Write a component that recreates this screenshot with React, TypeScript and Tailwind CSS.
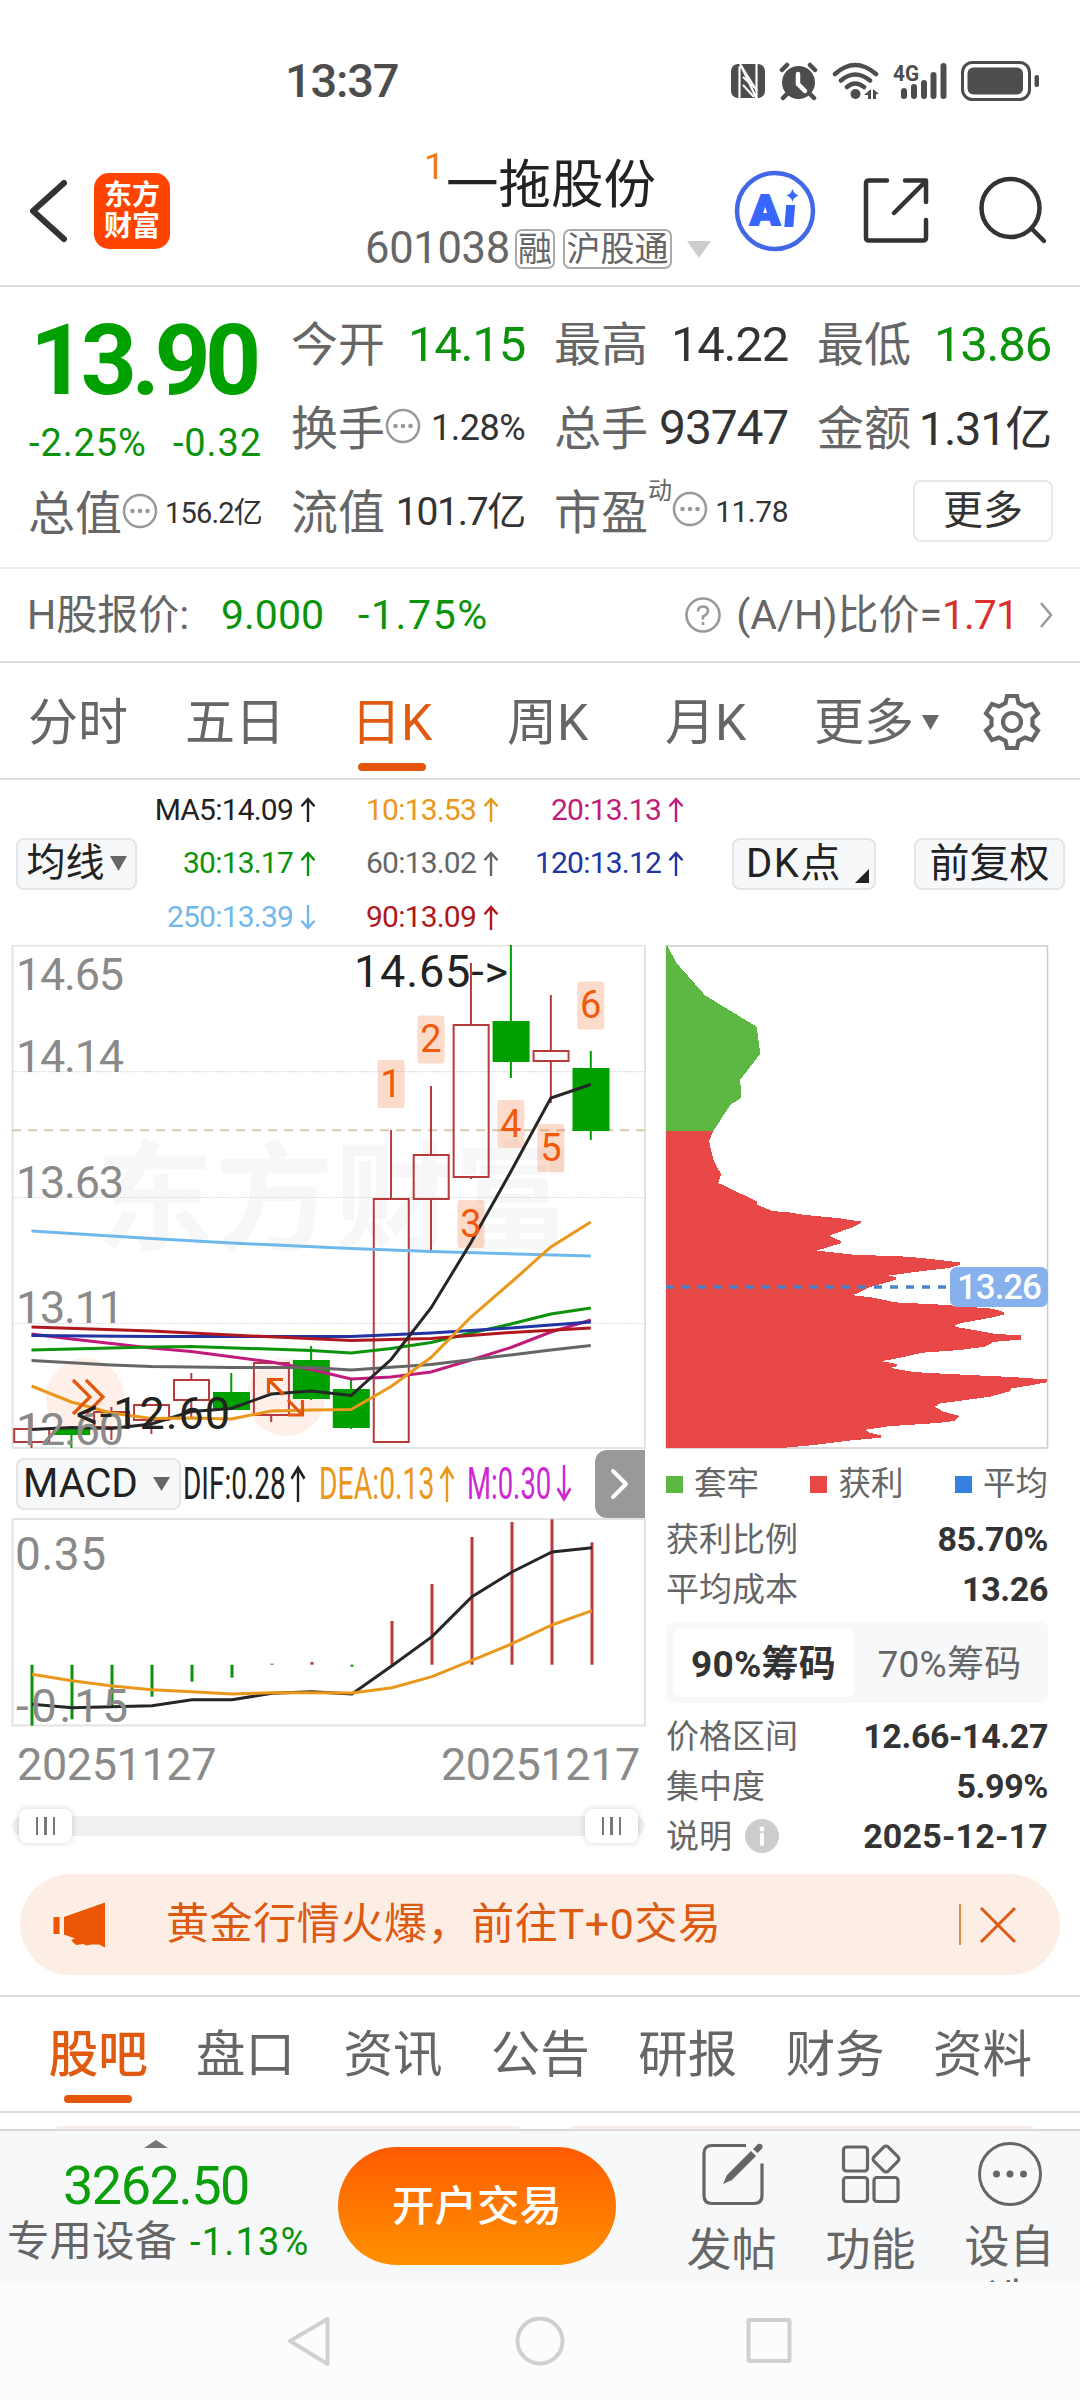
// App.tsx
import React from 'react';

interface TextProps {
  children: React.ReactNode;
  className?: string;
}

interface Candle {
  open: number;
  close: number;
  high: number;
  low: number;
  up: boolean;
}

const CANDLE_X = 31.5;
const CANDLE_STEP = 39.95;

// top / bottom of the body and the wick ends, in chart pixels
const candles: Candle[] = [
  { open: 499, close: 512, high: 483, low: 518, up: true },
  { open: 499, close: 504, high: 499, low: 518, up: false },
  { open: 482, close: 497, high: 477, low: 510, up: true },
  { open: 475, close: 490, high: 475, low: 504, up: true },
  { open: 450, close: 470, high: 443, low: 487, up: true },
  { open: 463, close: 479, high: 443, low: 479, up: false },
  { open: 433, close: 485, high: 433, low: 492, up: true },
  { open: 431, close: 468, high: 416, low: 470, up: false },
  { open: 460, close: 497, high: 450, low: 499, up: false },
  { open: 269, close: 512, high: 200, low: 512, up: true },
  { open: 225, close: 269, high: 156, low: 320, up: true },
  { open: 95, close: 247, high: 33, low: 249, up: true },
  { open: 92, close: 131, high: 15, low: 148, up: false },
  { open: 121, close: 131, high: 65, low: 173, up: true },
  { open: 139, close: 200, high: 121, low: 210, up: false },
];

// [candle index, y]
const maLines: { color: string; points: number[][] }[] = [
  { color: '#c01c7c', points: [[0, 404], [1, 409], [3, 418], [4, 421.5], [6, 432], [7, 439.5], [8, 449], [9, 447], [10, 442], [11, 430], [12, 417.5], [13, 402], [14, 390]] },
  { color: '#0b930b', points: [[0, 420], [3, 417], [4, 416.5], [7, 420.5], [8, 423], [9, 418.5], [10, 412.5], [11, 403], [12, 394], [13, 384], [14, 378]] },
  { color: '#666666', points: [[0, 430.5], [2, 435], [3, 436.5], [5, 437.5], [7, 437.5], [8, 440], [10, 434.5], [12, 425], [13, 420], [14, 415.5]] },
  { color: '#2233a3', points: [[0, 405.5], [3, 406.5], [7, 406.5], [8, 406.5], [10, 403], [12, 398], [14, 392]] },
  { color: '#b01820', points: [[0, 397], [3, 401], [5, 405], [8, 410.5], [10, 408.5], [12, 402.5], [14, 398]] },
  { color: '#70b8ec', points: [[0, 301], [3, 308.5], [5, 313], [8, 318.5], [10, 321.5], [14, 326]] },
  { color: '#262626', points: [[0, 499.5], [1, 497.5], [2, 498.5], [3, 494], [4, 481.5], [5, 478.5], [6, 464], [7, 461], [8, 465.5], [9, 429.5], [10, 378], [11, 312.5], [12, 241.5], [13, 168], [14, 154.5]] },
  { color: '#ea981c', points: [[0, 456], [1, 472], [2, 483], [3, 488.5], [4, 488], [5, 489], [6, 481], [7, 480], [8, 479.5], [9, 456.5], [10, 427.5], [11, 387], [12, 352.5], [13, 317], [14, 292]] },
];

const dayTags = [
  { n: 1, i: 9, y: 130 },
  { n: 2, i: 10, y: 85.5 },
  { n: 3, i: 11, y: 270 },
  { n: 4, i: 12, y: 170 },
  { n: 5, i: 13, y: 194 },
  { n: 6, i: 14, y: 51.5 },
];

const macdBars = [857, 838, 802, 770, 725, 713, 671, 666, 680, 543, 432, 291, 246, 238, 307];
const macdDif = [793, 803, 800, 797, 779, 779, 760, 755, 762, 677, 590, 470, 396, 336, 323];
const macdDea = [703, 722, 738, 749, 755, 762, 758, 758, 759, 743, 710, 661, 611, 555, 512];

const chipGreen = '78,47 82,47 110,98 195,193 350,286 361,366 301,442 303,497 271,517 220,595 78,595';
const chipRed =
  '78,595 220,595 207,624 220,680 243,722 235,748 350,802 350,812 397,831 447,835 490,842 595,852 663,862 663,867 640,878 567,904 603,920 603,926 530,948 640,960 803,966 875,973 960,983 960,990 925,1000 850,1008 745,1022 768,1026 768,1034 740,1042 690,1056 665,1068 638,1080 700,1087 765,1101 908,1108 1060,1120 1091,1130 1091,1137 1060,1145 965,1162 945,1168 950,1174 1010,1184 1065,1194 1143,1199 1143,1211 1060,1218 1035,1232 960,1242 845,1250 795,1262 725,1275 770,1283 770,1290 752,1295 822,1307 892,1311 1118,1322 1222,1329 1222,1337 1175,1346 1115,1355 1110,1364 1050,1380 975,1390 900,1400 885,1410 910,1424 958,1437 943,1452 890,1458 750,1467 675,1478 690,1487 723,1494 723,1501 625,1510 520,1523 420,1532 78,1532';

const xAt = (i: number) => CANDLE_X + CANDLE_STEP * i;
const toPoints = (pts: number[][]) => pts.map(([i, y]) => `${xAt(i)},${y}`).join(' ');

const Label: React.FC<TextProps> = ({ children, className = '' }) => (
  <span className={`-ml-[1px] pt-[3px] text-[47px] leading-none text-[#666] ${className}`}>{children}</span>
);

const Dots: React.FC<{ className?: string }> = ({ className = '' }) => (
  <svg className={`h-[36px] w-[36px] shrink-0 ${className}`} viewBox="0 0 36 36" fill="none">
    <circle cx="18" cy="18" r="16" stroke="#999" strokeWidth="2.5" />
    <circle cx="10.5" cy="18" r="2.3" fill="#999" />
    <circle cx="18" cy="18" r="2.3" fill="#999" />
    <circle cx="25.5" cy="18" r="2.3" fill="#999" />
  </svg>
);

const Arrow: React.FC<{ down?: boolean; className?: string }> = ({ down, className = '' }) => (
  <svg
    className={`shrink-0 ${down ? 'rotate-180' : ''} ${className}`}
    viewBox="0 0 16 26"
    preserveAspectRatio="none"
    fill="none"
    stroke="currentColor"
    strokeWidth="2.4"
  >
    <path d="M8 26V2M1.5 9.5L8 2l6.500 7.500" />
  </svg>
);

const StatusBar = () => (
  <div className="flex h-[130px] items-center pt-[31px]">
    <span className="ml-[285px] w-[446px] text-[47px] leading-none font-medium tracking-[-1.200px] text-[#4d4d4d]">13:37</span>
    <svg className="h-[40px] w-[310px]" viewBox="731 60 310 40" fill="#4d4d4d">
      <rect x="731" y="63" width="34" height="34" rx="7" />
      <path d="M739.500 97V66.500l2-1 14.500 31h.500V63" fill="none" stroke="#fff" strokeWidth="2.200" />
      <path d="M740 63l17 27M743 76l12 11M743 84l11 12" fill="none" stroke="#fff" strokeWidth="2" />
      <circle cx="798.500" cy="81.500" r="16.500" />
      <path d="M782 69l5-5M815 69l-5-5M788 92l-5 5M809 92l5 5" stroke="#4d4d4d" strokeWidth="4.500" strokeLinecap="round" />
      <path d="M798 73v10l7 7" fill="none" stroke="#fff" strokeWidth="4.500" strokeLinecap="round" />
      <g fill="none" stroke="#4d4d4d" strokeWidth="4.500" strokeLinecap="round">
        <path d="M835 73q20-18 41 0M841 79.500q14-12 29 0M847 86q8-7 17 0" />
      </g>
      <circle cx="855.500" cy="93" r="5" />
      <path d="M871 88v10h-3v-4l-4 0zM873 88l6 5h-3v5h-3z" />
      <text x="893" y="79.500" fontSize="22" fontWeight="700" textLength="26" lengthAdjust="spacingAndGlyphs">4G</text>
      <g stroke="#4d4d4d" strokeWidth="6" strokeLinecap="round">
        <path d="M904 90v5M914 86v9M924 82v13M933.500 74v21M943.500 65v30" />
      </g>
      <rect x="962.500" y="61.500" width="67" height="37" rx="10" fill="none" stroke="#4d4d4d" strokeWidth="3" />
      <rect x="967.500" y="66.500" width="55.500" height="27" rx="6" />
      <rect x="1034.500" y="74" width="4.500" height="12" rx="2" />
    </svg>
  </div>
);

const Header = () => (
  <header className="flex h-[157px] items-center border-b-2 border-[#dcdcdc] pt-[7px]">
    <svg className="ml-[27px] h-[70px] w-[42px]" viewBox="28 176 42 70" fill="none" stroke="#333" strokeWidth="6">
      <path d="M65 183L34 211l31 28" strokeLinecap="round" strokeLinejoin="round" />
    </svg>
    <div className="ml-[25px] flex h-[76px] w-[76px] flex-col items-center justify-center rounded-[15px] bg-[#ff4400] text-[28px] leading-[31px] font-bold text-white">
      <span>东方</span>
      <span>财富</span>
    </div>
    <div className="ml-[190px] flex w-[352px] flex-col pt-[3px]">
      <div className="relative ml-[86px] text-[52.500px] leading-[60px] text-[#222]">
        一拖股份
        <span className="absolute -top-[7px] -left-[22px] text-[37px] leading-none text-[#ee7c14]">1</span>
      </div>
      <div className="mt-[13px] flex h-[42px] items-center text-[#666]">
        <span className="ml-[5px] w-[152px] text-[43.500px] leading-none tracking-[-0.3px]">601038</span>
        <span className="-ml-[2px] flex h-[40px] w-[40px] items-center justify-center rounded-[7px] border-2 border-[#aaa] text-[34px] leading-none">融</span>
        <span className="ml-[8px] flex h-[40px] w-[109px] items-center justify-center rounded-[7px] border-2 border-[#aaa] text-[34px] leading-none">沪股通</span>
        <svg className="ml-[15px] h-[17px] w-[24px]" viewBox="0 0 24 17">
          <path d="M0 0h24L12 17z" fill="#ccc" />
        </svg>
      </div>
    </div>
    <svg className="ml-[20px] h-[84px] w-[330px]" viewBox="732 169 330 84" fill="none" stroke="#333" strokeWidth="4.500" strokeLinecap="round">
      <circle cx="775" cy="211" r="38" stroke="#4268e8" />
      <text x="750" y="225" fontSize="43" fontWeight="900" fill="#3767ff" stroke="#3767ff" strokeWidth="2" textLength="30" lengthAdjust="spacingAndGlyphs">A</text>
      <path d="M788 207h5l-1.500 18h-5z" fill="#3767ff" stroke="#3767ff" strokeWidth="4" />
      <path d="M792.500 189q1.500 5 6 6.500q-4.500 1.500-6 6q-1.500-4.500-6-6q4.500-1.500 6-6.500z" fill="#3767ff" stroke="none" />
      <path d="M887 180.500h-18q-3 0-3 3v54q0 3 3 3h54q3 0 3-3V220M905 180.500h21V202M925 182L894 213" strokeLinejoin="round" />
      <circle cx="1010.500" cy="208" r="29" />
      <path d="M1032 229l12 12" />
    </svg>
  </header>
);

const Quote = () => (
  <section className="flex h-[282px] gap-[30px] border-b-2 border-[#ececec] pl-[29px]">
    <div className="flex w-[233px] flex-col">
      <div className="mt-[24px] flex h-[100px] items-center pl-[1px] text-[98px] leading-none font-bold tracking-[-5.500px] text-[#00a000]">13.90</div>
      <div className="mt-[10px] flex h-[44px] items-center justify-between text-[38px] leading-none tracking-[0.900px] text-[#0b930b]">
        <span>-2.25%</span>
        <span>-0.32</span>
      </div>
      <div className="mt-[18px] flex h-[60px] items-center text-[#333]">
        <Label className="-mt-[3px]">总值</Label>
        <Dots className="-mt-[5px]" />
        <span className="ml-auto text-[29px] leading-none tracking-[-0.8px]">156.2亿</span>
      </div>
    </div>
    <div className="grid w-[759px] grid-cols-3 grid-rows-[84px_84px_84px] gap-x-[30px] pt-[14px] text-[#333]">
      <div className="flex items-center justify-between">
        <Label>今开</Label>
        <span className="pt-[2px] text-[49px] leading-none tracking-[-1.200px] text-[#0b930b]">14.15</span>
      </div>
      <div className="flex items-center justify-between">
        <Label>最高</Label>
        <span className="pt-[2px] text-[49px] leading-none tracking-[-1.200px]">14.22</span>
      </div>
      <div className="flex items-center justify-between">
        <Label>最低</Label>
        <span className="pt-[2px] text-[49px] leading-none tracking-[-1.200px] text-[#0b930b]">13.86</span>
      </div>
      <div className="flex items-center">
        <Label>换手</Label>
        <Dots className="-mt-[3px]" />
        <span className="ml-auto pt-[2px] text-[36px] leading-none tracking-[-0.500px]">1.28%</span>
      </div>
      <div className="flex items-center justify-between">
        <Label>总手</Label>
        <span className="pt-[2px] text-[48px] leading-none tracking-[-1.200px]">93747</span>
      </div>
      <div className="flex items-center justify-between">
        <Label>金额</Label>
        <span className="pt-[2px] text-[47px] leading-none tracking-[-1.300px]">1.31亿</span>
      </div>
      <div className="flex items-center justify-between">
        <Label>流值</Label>
        <span className="pt-[2px] text-[39px] leading-none tracking-[-1.300px]">101.7亿</span>
      </div>
      <div className="flex items-center">
        <Label>市盈</Label>
        <span className="mb-[40px] text-[24px] leading-none text-[#666]">动</span>
        <Dots className="-mt-[4px]" />
        <span className="ml-auto pt-[2px] text-[30px] leading-none tracking-[-0.5px]">11.78</span>
      </div>
      <div className="flex items-center justify-end">
        <button className="-mr-[2px] h-[62px] w-[140px] rounded-[8px] border-2 border-[#e8e8ea] text-[40px] leading-none">更多</button>
      </div>
    </div>
  </section>
);

const HShare = () => (
  <section className="flex h-[94px] items-center border-b-2 border-[#dcdcdc] pl-[27px] text-[41px] leading-none text-[#666]">
    <span className="w-[194px]">H股报价:</span>
    <span className="w-[137px] text-[#0b930b]">9.000</span>
    <span className="tracking-[1.600px] text-[#0b930b]">-1.75%</span>
    <svg className="ml-auto h-[38px] w-[38px]" viewBox="0 0 38 38" fill="none" stroke="#999" strokeWidth="2.600">
      <circle cx="19" cy="19" r="16.500" />
      <path d="M14 15.500q0-5 5-5t5 4.500q0 3-5 5.500v3M19 26v3" />
    </svg>
    <span className="ml-[14px]">(A/H)比价=</span>
    <span className="w-[76px] tracking-[-1px] text-[#d9302c]">1.71</span>
    <svg className="mr-[27px] ml-[21px] h-[28px] w-[14px]" viewBox="0 0 14 28" fill="none" stroke="#999" strokeWidth="2.500">
      <path d="M2 2l10 12L2 26" />
    </svg>
  </section>
);

const PeriodTabs = () => (
  <nav className="flex h-[117px] items-center border-b-2 border-[#dcdcdc] pt-[4px] pl-[28px] text-[50px] leading-none text-[#666]">
    <span className="w-[157px]">分时</span>
    <span className="w-[166px]">五日</span>
    <span className="relative w-[156px] text-[#e05a10]">
      日K
      <span className="absolute top-[65px] left-[7px] h-[8px] w-[68px] rounded-full bg-[#e4570a]" />
    </span>
    <span className="w-[158px]">周K</span>
    <span className="w-[149px]">月K</span>
    <span>更多</span>
    <svg className="ml-[8px] h-[15px] w-[17px]" viewBox="0 0 17 15">
      <path d="M0 0h17L8.500 15z" fill="#666" />
    </svg>
    <svg className="-mt-[2px] ml-[42px] h-[62px] w-[62px]" viewBox="-31 -31 62 62" fill="none" stroke="#666" strokeWidth="4.200">
      <path d="M-5-26H5L6.500-19L13-15.500L20-18L26-8.500L20.500-3.500V3.500L26 8.500L20 18L13 15.500L6.500 19L5 26H-5L-6.500 19L-13 15.500L-20 18L-26 8.500L-20.500 3.500V-3.500L-26-8.500L-20-18L-13-15.500L-6.500-19Z" />
      <circle r="9" />
    </svg>
  </nav>
);

const MaItem: React.FC<TextProps & { down?: boolean }> = ({ children, className = '', down }) => (
  <span className={`flex items-center justify-end gap-[7px] ${className}`}>
    {children}
    <Arrow down={down} className="h-[25px] w-[16px]" />
  </span>
);

const MaBar = () => (
  <section className="flex h-[165px] items-center pt-[2px] pl-[16px] text-[#222]">
    <button className="flex h-[52px] w-[121px] items-center justify-center gap-[5px] rounded-[8px] border-2 border-[#e3e5e8] bg-[#f7f8fa] text-[39px] leading-none">
      均线
      <svg className="h-[15px] w-[17px]" viewBox="0 0 17 15">
        <path d="M0 0h17L8.500 15z" fill="#666" />
      </svg>
    </button>
    <div className="grid h-[161px] w-[548px] grid-cols-[179px_183px_185px] grid-rows-3 text-[30px] leading-none tracking-[-0.800px]">
      <MaItem>MA5:14.09</MaItem>
      <MaItem className="text-[#ea981c]">10:13.53</MaItem>
      <MaItem className="text-[#c01c7c]">20:13.13</MaItem>
      <MaItem className="text-[#0b930b]">30:13.17</MaItem>
      <MaItem className="text-[#666]">60:13.02</MaItem>
      <MaItem className="text-[#2233a3]">120:13.12</MaItem>
      <MaItem className="text-[#70b8ec]" down>250:13.39</MaItem>
      <MaItem className="text-[#b01820]">90:13.09</MaItem>
    </div>
    <button className="ml-[47px] flex h-[52px] w-[144px] items-center rounded-[8px] border-2 border-[#e3e5e8] bg-[#f7f8fa] pl-[12px] text-[40px] leading-none tracking-[1.600px]">
      DK点
      <svg className="mt-[25px] ml-auto h-[14px] w-[14px]" viewBox="0 0 14 14">
        <path d="M14 0v14H0z" fill="#222" />
      </svg>
      <span className="w-[5px]" />
    </button>
    <button className="ml-[38px] h-[52px] w-[151px] rounded-[8px] border-2 border-[#e3e5e8] bg-[#f7f8fa] text-[40px] leading-none whitespace-nowrap">前复权</button>
  </section>
);

const KLineChart = () => (
  <svg className="block h-[505px] w-[650px]" viewBox="0 15 650 505" fill="none">
    <text x="96" y="311" fontSize="118" fontWeight="700" fill="#f7f7f7" textLength="476">东方财富</text>
    <rect x="12.500" y="15.500" width="632.500" height="502.500" stroke="#e3e3e3" strokeWidth="2" />
    <path d="M12 141.600H645M12 267.500H645M12 393.500H645" stroke="#d4d4d4" strokeWidth="1.200" strokeDasharray="1.500 1.500" />
    <path d="M12 200.200H645" stroke="#d9c8ac" strokeWidth="2" strokeDasharray="9 7" />
    <g fontSize="45" fill="#8a8a8a">
      <text x="16" y="59.500" textLength="108">14.65</text>
      <text x="16" y="142" textLength="108">14.14</text>
      <text x="16" y="268" textLength="108">13.63</text>
      <text x="16" y="393" textLength="108">13.11</text>
    </g>
    <circle cx="85" cy="467" r="39" fill="#fef0e9" />
    <circle cx="286" cy="467" r="39" fill="#fef0e9" />
    {candles.map((c, i) => (
      <g key={i} stroke={c.up ? '#b83b3b' : '#00a000'} strokeWidth="2">
        <path d={`M${xAt(i)} ${c.high}V${c.open}M${xAt(i)} ${c.close}V${c.low}`} />
        <rect x={xAt(i) - 17.300} y={c.open} width="35" height={c.close - c.open} fill={c.up ? 'none' : '#00a000'} />
      </g>
    ))}
    {dayTags.map((t) => (
      <rect key={t.n} x={xAt(t.i) - 13.500} y={t.y} width="27" height="48" rx="3" fill="#f36820" fillOpacity="0.240" />
    ))}
    {maLines.map((l) => (
      <polyline key={l.color} points={toPoints(l.points)} stroke={l.color} strokeWidth="3" />
    ))}
    {dayTags.map((t) => (
      <text key={t.n} x={xAt(t.i)} y={t.y + 36.500} fontSize="38" textAnchor="middle" fill="#f05a0c">{t.n}</text>
    ))}
    <g stroke="#e4570a" strokeWidth="3.200" fill="none">
      <path d="M73 450l17 17l-17 17M86 450l17 17l-17 17" />
      <path d="M283 449.500h-14.500v14M268.500 449.500l15 15M288 485h14.500v-15M302.500 485l-14.500-15" />
    </g>
    <text x="16" y="515" fontSize="45" fill="#8a8a8a" textLength="108">12.60</text>
    <g fontSize="45" fill="#222">
      <text x="354" y="57" textLength="154">14.65-&gt;</text>
      <text x="76" y="499" textLength="154">&lt;-12.60</text>
    </g>
  </svg>
);

const MacdBar = () => (
  <div className="flex h-[70px] items-center pt-[1px] pl-[16px] text-[#222]">
    <button className="flex h-[52px] w-[165px] items-center justify-between rounded-[8px] border-2 border-[#e3e5e8] bg-[#f7f8fa] pr-[9px] pl-[5px] text-[40.500px] leading-none">
      MACD
      <svg className="h-[14px] w-[17px]" viewBox="0 0 17 14">
        <path d="M0 0h17L8.500 14z" fill="#666" />
      </svg>
    </button>
    <span className="ml-[2px] w-[107px] origin-left scale-x-[0.635] text-[44px] leading-none whitespace-nowrap">DIF:0.28</span>
    <Arrow className="h-[37px] w-[16px]" />
    <span className="ml-[13px] w-[120px] origin-left scale-x-[0.645] text-[44px] leading-none whitespace-nowrap text-[#ea981c]">DEA:0.13</span>
    <Arrow className="h-[37px] w-[16px] text-[#ea981c]" />
    <span className="ml-[12px] w-[89px] origin-left scale-x-[0.625] text-[44px] leading-none whitespace-nowrap text-[#cc28d4]">M:0.30</span>
    <Arrow down className="h-[37px] w-[16px] text-[#cc28d4]" />
    <span className="ml-auto flex h-[68px] w-[50px] items-center justify-center rounded-l-[12px] bg-[#999]">
      <svg className="h-[32px] w-[20px]" viewBox="0 0 20 32" fill="none" stroke="#fff" strokeWidth="4" strokeLinecap="round" strokeLinejoin="round">
        <path d="M3 3l13 13L3 29" />
      </svg>
    </span>
  </div>
);

const MacdChart = () => (
  <svg className="block h-[209px] w-[650px]" viewBox="0 78 650 209" fill="none">
    <rect x="12.500" y="79" width="632.500" height="206.500" stroke="#e3e3e3" strokeWidth="2" />
    {macdBars.map((v, i) => (
      <path key={i} d={`M${32 + 40 * i} 224.700V${v / 3}`} stroke={v > 674 ? '#0b930b' : '#b83b3b'} strokeWidth="3" />
    ))}
    <polyline points={macdDif.map((v, i) => `${32 + 40 * i},${v / 3}`).join(' ')} stroke="#262626" strokeWidth="3" />
    <polyline points={macdDea.map((v, i) => `${32 + 40 * i},${v / 3}`).join(' ')} stroke="#ea981c" strokeWidth="3" />
    <g fontSize="46" fill="#8a8a8a">
      <text x="15" y="129.500" textLength="91">0.35</text>
      <text x="16" y="281.500" textLength="112">-0.15</text>
    </g>
  </svg>
);

const Handle = () => (
  <span className="flex h-[34px] w-[53px] items-center justify-center gap-[6px] rounded-[8px] bg-white shadow-[0_0_6px_rgba(0,0,0,0.18)]">
    <span className="h-[18px] w-[2.500px] bg-[#777]" />
    <span className="h-[18px] w-[2.500px] bg-[#777]" />
    <span className="h-[18px] w-[2.500px] bg-[#777]" />
  </span>
);

const ChipChart = () => (
  <svg className="block h-[505px] w-[430px]" viewBox="0 15 430 505" fill="none">
    <rect x="26.500" y="16" width="381" height="502" stroke="#ccc" strokeWidth="1.500" />
    <g transform="scale(0.3333 0.3382)" shapeRendering="crispEdges">
      <polygon points={chipGreen} fill="#5cb843" />
      <polygon points={chipRed} fill="#e84848" />
    </g>
    <path d="M26 357H308" stroke="#4585c8" strokeWidth="3.500" strokeDasharray="8 8" />
    <rect x="310" y="337" width="98" height="40" rx="7" fill="#86b1ec" />
    <text x="317" y="369" fontSize="35" fill="#fff" textLength="85" className="font-medium">13.26</text>
  </svg>
);

const ChipRow: React.FC<{ name: React.ReactNode; value: string; wide?: boolean }> = ({ name, value, wide }) => (
  <div className="flex h-[50px] items-center justify-between">
    <span className="flex items-center text-[33px] leading-none text-[#666]">{name}</span>
    <span className={`text-[34px] leading-none font-bold text-[#333] ${wide ? 'tracking-[0.200px]' : 'tracking-[-0.400px]'}`}>{value}</span>
  </div>
);

const ChipPanel = () => (
  <div className="w-[430px]">
    <ChipChart />
    <div className="pr-[22px] pl-[26px]">
      <div className="flex h-[64px] items-center justify-between pt-[5px] text-[32.500px] leading-none text-[#666]">
        <span className="flex items-center gap-[11px]"><i className="h-[17px] w-[17px] bg-[#5cb843]" />套牢</span>
        <span className="flex items-center gap-[11px]"><i className="h-[17px] w-[17px] bg-[#e84848]" />获利</span>
        <span className="flex items-center gap-[11px]"><i className="h-[17px] w-[17px] bg-[#3481e0]" />平均</span>
      </div>
      <ChipRow name="获利比例" value="85.70%" />
      <ChipRow name="平均成本" value="13.26" />
      <div className="my-[8px] flex h-[81px] items-center rounded-[8px] bg-[#f7f8fa] px-[7px] text-[37px] leading-none">
        <span className="flex h-[68px] w-[184px] items-center justify-center rounded-[8px] bg-white pt-[3px] font-bold tracking-[0.200px] text-[#333]">90%筹码</span>
        <span className="flex w-[190px] items-center justify-center pt-[3px] pl-[4px] tracking-[0.300px] text-[#666]">70%筹码</span>
      </div>
      <ChipRow name="价格区间" value="12.66-14.27" />
      <ChipRow name="集中度" value="5.99%" />
      <ChipRow
        name={
          <>
            说明
            <svg className="ml-[13px] h-[34px] w-[34px]" viewBox="0 0 34 34">
              <circle cx="17" cy="17" r="17" fill="#ccc" />
              <circle cx="17" cy="10" r="2.500" fill="#fff" />
              <path d="M17 15.500v9.500" stroke="#fff" strokeWidth="4" strokeLinecap="round" />
            </svg>
          </>
        }
        value="2025-12-17"
        wide
      />
    </div>
  </div>
);

const Charts = () => (
  <section className="flex h-[929px]">
    <div className="w-[650px]">
      <KLineChart />
      <div className="-mt-[2px] w-[645px]">
        <MacdBar />
      </div>
      <div>
        <MacdChart />
      </div>
      <div className="flex h-[72px] w-[640px] items-center justify-between pt-[2px] pl-[17px] text-[45px] leading-none tracking-[-0.400px] text-[#8a8a8a]">
        <span>20251127</span>
        <span>20251217</span>
      </div>
      <div className="mt-[17px] ml-[12px] flex h-[20px] w-[633px] items-center justify-between rounded-full bg-[#f0f0f2] px-[7px]">
        <Handle />
        <Handle />
      </div>
    </div>
    <div className="-ml-[10px]">
      <ChipPanel />
    </div>
  </section>
);

const Banner = () => (
  <div className="mx-[20px] flex h-[101px] items-center rounded-full bg-[#fceee5] text-[#dc5a12]">
    <svg className="ml-[33px] h-[48px] w-[54px]" viewBox="53 1900 54 48" fill="#eb5604">
      <path d="M53.500 1916h6v17h-6zM64 1916l41-14.500v45l-6-3h-8l-4 1l-4-1.500l-7 1l-5-5l4-1.500l-11-4z" />
    </svg>
    <span className="ml-[59px] text-[43px] leading-none tracking-[0.600px]">黄金行情火爆，前往T+0交易</span>
    <span className="ml-auto h-[41px] w-[2px] bg-[#e4843f]" />
    <svg className="mr-[43px] ml-[18px] h-[38px] w-[38px]" viewBox="0 0 38 38" stroke="#dc5a12" strokeWidth="3">
      <path d="M2 2l34 34M36 2L2 36" />
    </svg>
  </div>
);

const sectionTabs = ['股吧', '盘口', '资讯', '公告', '研报', '财务', '资料'];

const SectionTabs = () => (
  <nav className="mt-[20px] flex h-[118px] items-center border-t-2 border-b-2 border-[#dcdcdc] pt-[4px] pl-[24.500px] text-[49.500px] leading-none text-[#666]">
    {sectionTabs.map((tab, i) => (
      <span key={tab} className={`relative flex w-[147.400px] justify-center ${i === 0 ? 'font-medium text-[#e05a10]' : ''}`}>
        {tab}
        {i === 0 && <span className="absolute top-[64px] left-[39px] h-[8px] w-[68px] rounded-full bg-[#e4570a]" />}
      </span>
    ))}
  </nav>
);

const BottomBar = () => (
  <footer className="flex h-[153px] overflow-hidden border-t-2 border-[#d8dadc] bg-[#f7f8fa] text-[#666]">
    <div className="flex w-[338px] flex-col">
      <svg className="mt-[9px] ml-[144px] h-[8px] w-[24px]" viewBox="0 0 24 8">
        <path d="M0 8L12 0l12 8z" fill="#777" />
      </svg>
      <span className="mt-[9px] ml-[63px] text-[54px] leading-[58px] tracking-[-1.500px] text-[#0b9f0b]">3262.50</span>
      <div className="flex h-[52px] items-center pt-[2px]">
        <span className="ml-[7px] w-[183px] text-[42.500px] leading-none">专用设备</span>
        <span className="text-[38px] leading-none tracking-[1.200px] text-[#0b930b]">-1.13%</span>
      </div>
    </div>
    <button className="mt-[16px] h-[118px] w-[278px] rounded-full bg-linear-to-b from-[#ff5a00] to-[#ff9000] pt-[3px] text-[42.500px] leading-none font-medium text-white">开户交易</button>
    <div className="ml-[46px] flex text-[45px] leading-[54px]">
      <div className="flex w-[139px] flex-col items-center">
        <svg className="mt-[10px] h-[66px] w-[66px] shrink-0" viewBox="699 2140 66 66" fill="none" stroke="#666" strokeWidth="3.200">
          <path d="M746 2144.500h-34q-8 0-8 8v42q0 8 8 8h42q8 0 8-8v-32" />
          <path d="M723 2183l4-9l24-24l5 5l-24 24zM753 2148l5-5q5-1 4.500 4l-5 5z" fill="#666" stroke="none" />
        </svg>
        <span className="mt-[17px]">发帖</span>
      </div>
      <div className="flex w-[139px] flex-col items-center">
        <svg className="mt-[10px] h-[66px] w-[66px] shrink-0" viewBox="839 2140 66 66" fill="none" stroke="#666" strokeWidth="3.200">
          <rect x="844.500" y="2146" width="24" height="24" rx="3" />
          <rect x="844.500" y="2176.500" width="24" height="24" rx="3" />
          <rect x="875" y="2176.500" width="24" height="24" rx="3" />
          <rect x="877" y="2148" width="20" height="20" rx="3" transform="rotate(45 887 2158)" />
        </svg>
        <span className="mt-[17px]">功能</span>
      </div>
      <div className="flex w-[139px] flex-col items-center">
        <svg className="mt-[10px] h-[66px] w-[66px] shrink-0" viewBox="-33 -33 66 66">
          <circle r="30.500" fill="none" stroke="#666" strokeWidth="3" />
          <circle cx="-13.500" r="3.500" fill="#666" />
          <circle r="3.500" fill="#666" />
          <circle cx="13.500" r="3.500" fill="#666" />
        </svg>
        <span className="mt-[14px] w-[92px] shrink-0 text-center">设自选</span>
      </div>
    </div>
  </footer>
);

const SystemNav = () => (
  <div className="flex h-[118px] justify-center bg-[#fcfcfc]">
    <svg className="mt-[29px] h-[60px] w-[520px]" viewBox="280 2311 520 60" fill="none" stroke="#d0d0d0" strokeWidth="4" strokeLinejoin="round">
      <path d="M327.500 2319v45L290 2341z" />
      <circle cx="540" cy="2341" r="22.500" />
      <rect x="748.500" y="2320" width="41" height="41" rx="1" />
    </svg>
  </div>
);

const App: React.FC = () => {
  return (
    <div className="flex h-[2400px] w-[1080px] flex-col overflow-hidden bg-white font-[Roboto,'Noto_Sans_CJK_SC',sans-serif]">
      <StatusBar />
      <Header />
      <Quote />
      <HShare />
      <PeriodTabs />
      <MaBar />
      <Charts />
      <Banner />
      <SectionTabs />
      <div className="flex h-[16px] shrink-0 items-end gap-[50px] pl-[56px]">
        <span className="h-[3px] w-[464px] rounded-t-full bg-[#fbeeea]" />
        <span className="h-[3px] w-[464px] rounded-t-full bg-[#fbeeea]" />
      </div>
      <BottomBar />
      <SystemNav />
    </div>
  );
};

export default App;
